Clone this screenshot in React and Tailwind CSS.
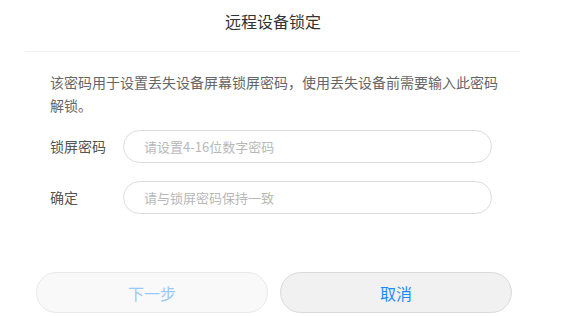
import React from 'react';

const font = { fontFamily: '"Noto Sans CJK SC", "Noto Sans", sans-serif' };

const Field = ({ label, placeholder, className }) => (
  <div className={`flex items-center ${className}`}>
    <label className="w-[73px] text-[14px] text-[#555]">{label}</label>
    <input
      type="password"
      placeholder={placeholder}
      className="h-[33px] w-[369px] rounded-full border border-[#dcdcdc] bg-white px-[20px] text-[13px] text-[#333] outline-none placeholder:text-[#b8b8b8]"
    />
  </div>
);

const App = () => {
  return (
    <div className="h-[316px] w-[584px] overflow-hidden bg-white" style={font}>
      <div className="flex w-[546px] flex-col">
        <h1 className="mt-[10px] text-center text-[16px] leading-[22px] text-[#333]">远程设备锁定</h1>
        <div className="ml-[25px] mt-[19px] h-px w-[495px] bg-[#f0f0f0]" />

        <p className="ml-[50px] mt-[19px] w-[452px] text-[14px] leading-[23px] text-[#666]">
          该密码用于设置丢失设备屏幕锁屏密码，使用丢失设备前需要输入此密码解锁。
        </p>

        <Field className="ml-[50px] mt-[13px]" label="锁屏密码" placeholder="请设置4-16位数字密码" />
        <Field className="ml-[50px] mt-[18px]" label="确定" placeholder="请与锁屏密码保持一致" />

        <div className="ml-[36px] mt-[58px] flex gap-[12px]">
          <button
            disabled
            className="h-[41px] w-[232px] rounded-full border border-[#e8e8e8] bg-[#f9f9f9] text-[16px] text-[#99c8fb]"
          >
            下一步
          </button>
          <button className="h-[41px] w-[232px] rounded-full border border-[#dadada] bg-[#f1f1f1] text-[16px] text-[#1a8cff]">
            取消
          </button>
        </div>
      </div>
    </div>
  );
};

export default App;
